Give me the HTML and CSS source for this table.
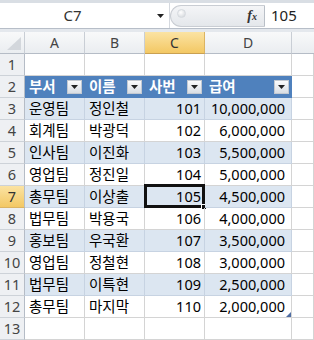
FILE: index.html
```html
<!DOCTYPE html>
<html lang="ko">
<head>
<meta charset="utf-8">
<link rel="stylesheet" href="styles.css">
</head>
<body>
<div class="formula-bar">
  <div class="name-box">
    <span class="name">C7</span>
    <svg class="dd" width="7" height="4" viewBox="0 0 7 4"><polygon points="0,0 7,0 3.5,4" fill="#222"/></svg>
  </div>
  <div class="fx-area">
    <span class="grip"></span>
    <span class="fx"><i>f</i><span class="fx-x">x</span></span>
  </div>
  <div class="formula-input">105</div>
</div>
<div class="sheet">
  <div class="ch corner"><svg width="14" height="13" viewBox="0 0 14 13"><polygon points="14,0 14,13 0,13" fill="#d3d7dc"/></svg></div>
  <div class="ch">A</div><div class="ch">B</div><div class="ch sel">C</div><div class="ch">D</div><div class="ch last"></div>

  <div class="rh">1</div><div class="c"></div><div class="c"></div><div class="c"></div><div class="c"></div><div class="c"></div>

  <div class="rh">2</div>
  <div class="c th">부서<span class="fb"><svg width="7" height="4" viewBox="0 0 7 4"><polygon points="0,0 7,0 3.5,4" fill="#222"/></svg></span></div>
  <div class="c th">이름<span class="fb"><svg width="7" height="4" viewBox="0 0 7 4"><polygon points="0,0 7,0 3.5,4" fill="#222"/></svg></span></div>
  <div class="c th">사번<span class="fb"><svg width="7" height="4" viewBox="0 0 7 4"><polygon points="0,0 7,0 3.5,4" fill="#222"/></svg></span></div>
  <div class="c th">급여<span class="fb"><svg width="7" height="4" viewBox="0 0 7 4"><polygon points="0,0 7,0 3.5,4" fill="#222"/></svg></span></div>
  <div class="c"></div>

  <div class="rh">3</div><div class="c band">운영팀</div><div class="c band">정인철</div><div class="c band num">101</div><div class="c band num d">10,000,000</div><div class="c"></div>
  <div class="rh">4</div><div class="c">회계팀</div><div class="c">박광덕</div><div class="c num">102</div><div class="c num d">6,000,000</div><div class="c"></div>
  <div class="rh">5</div><div class="c band">인사팀</div><div class="c band">이진화</div><div class="c band num">103</div><div class="c band num d">5,500,000</div><div class="c"></div>
  <div class="rh">6</div><div class="c">영업팀</div><div class="c">정진일</div><div class="c num">104</div><div class="c num d">5,000,000</div><div class="c"></div>
  <div class="rh sel">7</div><div class="c band">총무팀</div><div class="c band">이상출</div><div class="c band num active">105<span class="handle"></span></div><div class="c band num d">4,500,000</div><div class="c"></div>
  <div class="rh">8</div><div class="c">법무팀</div><div class="c">박용국</div><div class="c num">106</div><div class="c num d">4,000,000</div><div class="c"></div>
  <div class="rh">9</div><div class="c band">홍보팀</div><div class="c band">우국환</div><div class="c band num">107</div><div class="c band num d">3,500,000</div><div class="c"></div>
  <div class="rh">10</div><div class="c">영업팀</div><div class="c">정철현</div><div class="c num">108</div><div class="c num d">3,000,000</div><div class="c"></div>
  <div class="rh">11</div><div class="c band">법무팀</div><div class="c band">이특현</div><div class="c band num">109</div><div class="c band num d">2,500,000</div><div class="c"></div>
  <div class="rh">12</div><div class="c">총무팀</div><div class="c">마지막</div><div class="c num">110</div><div class="c num d resize">2,000,000</div><div class="c"></div>
  <div class="rh">13</div><div class="c"></div><div class="c"></div><div class="c"></div><div class="c"></div><div class="c"></div>
</div>
</body>
</html>
```
FILE: styles.css
```css
* { box-sizing: border-box; }
html, body { margin: 0; padding: 0; }
body {
  width: 314px;
  height: 340px;
  overflow: hidden;
  background: #e4e8ed;
  font-family: "Noto Sans", "Noto Sans CJK KR", sans-serif;
  color: #000;
}
.formula-bar {
  display: flex;
  height: 29px;
  margin-bottom: 3px;
  border-top: 3px solid #d9dee4;
  border-bottom: 1px solid #b7bec8;
  background: #fff;
}
.name-box {
  width: 170px;
  display: flex;
  align-items: center;
  border-right: 1px solid #d5d9df;
}
.name {
  width: 145px;
  text-align: center;
  font-size: 15px;
  color: #333;
  padding-bottom: 1px;
}
.dd { margin-left: 12px; }
.fx-area {
  width: 95px;
  margin: 2px 0 1px 0;
  border-radius: 11px 0 0 11px;
  border: 1px solid #c9cdd3;
  border-right: 1px solid #b9bfc7;
  background: linear-gradient(#f4f5f7, #e4e7eb);
  display: flex;
  align-items: center;
  justify-content: space-between;
  padding: 0 7px 0 6px;
}
.grip {
  width: 9px;
  height: 9px;
  border-radius: 50%;
  background: radial-gradient(circle at 40% 35%, #ffffff, #cfd3d8);
  border: 1px solid #d6dadf;
  margin-top: -6px;
}
.fx {
  font-family: "Liberation Serif", serif;
  font-weight: bold;
  font-size: 14px;
  color: #333;
}
.fx-x { font-size: 10px; font-style: italic; }
.formula-input {
  flex: 1;
  display: flex;
  align-items: center;
  padding-left: 6px;
  font-size: 15px;
  color: #222;
  padding-bottom: 1px;
}
.sheet {
  display: grid;
  grid-template-columns: 25px 60px 60px 60px 87px 1fr;
  grid-auto-rows: 22px;
  background: #fff;
}
.ch {
  display: flex;
  align-items: center;
  justify-content: center;
  background: linear-gradient(#f8f9fa, #eaedf0);
  border-right: 1px solid #c9ced5;
  border-bottom: 1px solid #b5bcc6;
  font-size: 14px;
  color: #444;
}
.ch.corner { justify-content: flex-end; align-items: flex-end; padding: 0 3px 3px 0; }
.ch.sel { background: linear-gradient(#fbe3a3, #f3c864); border-right-color: #dbb463; border-bottom-color: #c9a052; color: #333; }
.ch.last { border-right: 0; }
.rh {
  display: flex;
  align-items: center;
  justify-content: center;
  background: #eef0f3;
  border-right: 1px solid #b5bcc6;
  border-bottom: 1px solid #cdd2d8;
  font-size: 14.5px;
  color: #444;
  padding-bottom: 1px;
}
.rh.sel { background: linear-gradient(#fbe3a3, #f3c864); border-bottom-color: #dbb463; color: #333; }
.c {
  position: relative;
  display: flex;
  align-items: center;
  padding: 0 3px 2px 4px;
  border-right: 1px solid #d4d4d4;
  border-bottom: 1px solid #d4d4d4;
  font-size: 14.5px;
  white-space: nowrap;
}
.c.band { background: #dce6f1; border-right-color: #c7d3e2; border-bottom-color: #c7d3e2; }
.c.th {
  background: #4f81bd;
  color: #fff;
  font-weight: bold;
  border-right-color: #4f81bd;
  border-bottom-color: #4f81bd;
  justify-content: space-between;
  padding-right: 2px;
}
.fb {
  width: 15px;
  height: 14px;
  margin-top: 2px;
  display: flex;
  align-items: center;
  justify-content: center;
  background: linear-gradient(#fbfbfc, #d9dee4);
  border: 1px solid #c3c9d1;
}
.c.num { justify-content: flex-end; }
.c.d { padding-right: 6px; }
.c.active::before {
  content: "";
  position: absolute;
  left: -1px;
  top: -2px;
  right: -1px;
  bottom: -1px;
  border: 3px solid #111;
}
.handle {
  position: absolute;
  right: -3px;
  bottom: -3px;
  width: 6px;
  height: 6px;
  background: #111;
  border: 1px solid #fff;
}
.c.resize::after {
  content: "";
  position: absolute;
  right: 0;
  bottom: 0;
  border-style: solid;
  border-width: 0 0 5px 5px;
  border-color: transparent transparent #4f6da3 transparent;
}
```
